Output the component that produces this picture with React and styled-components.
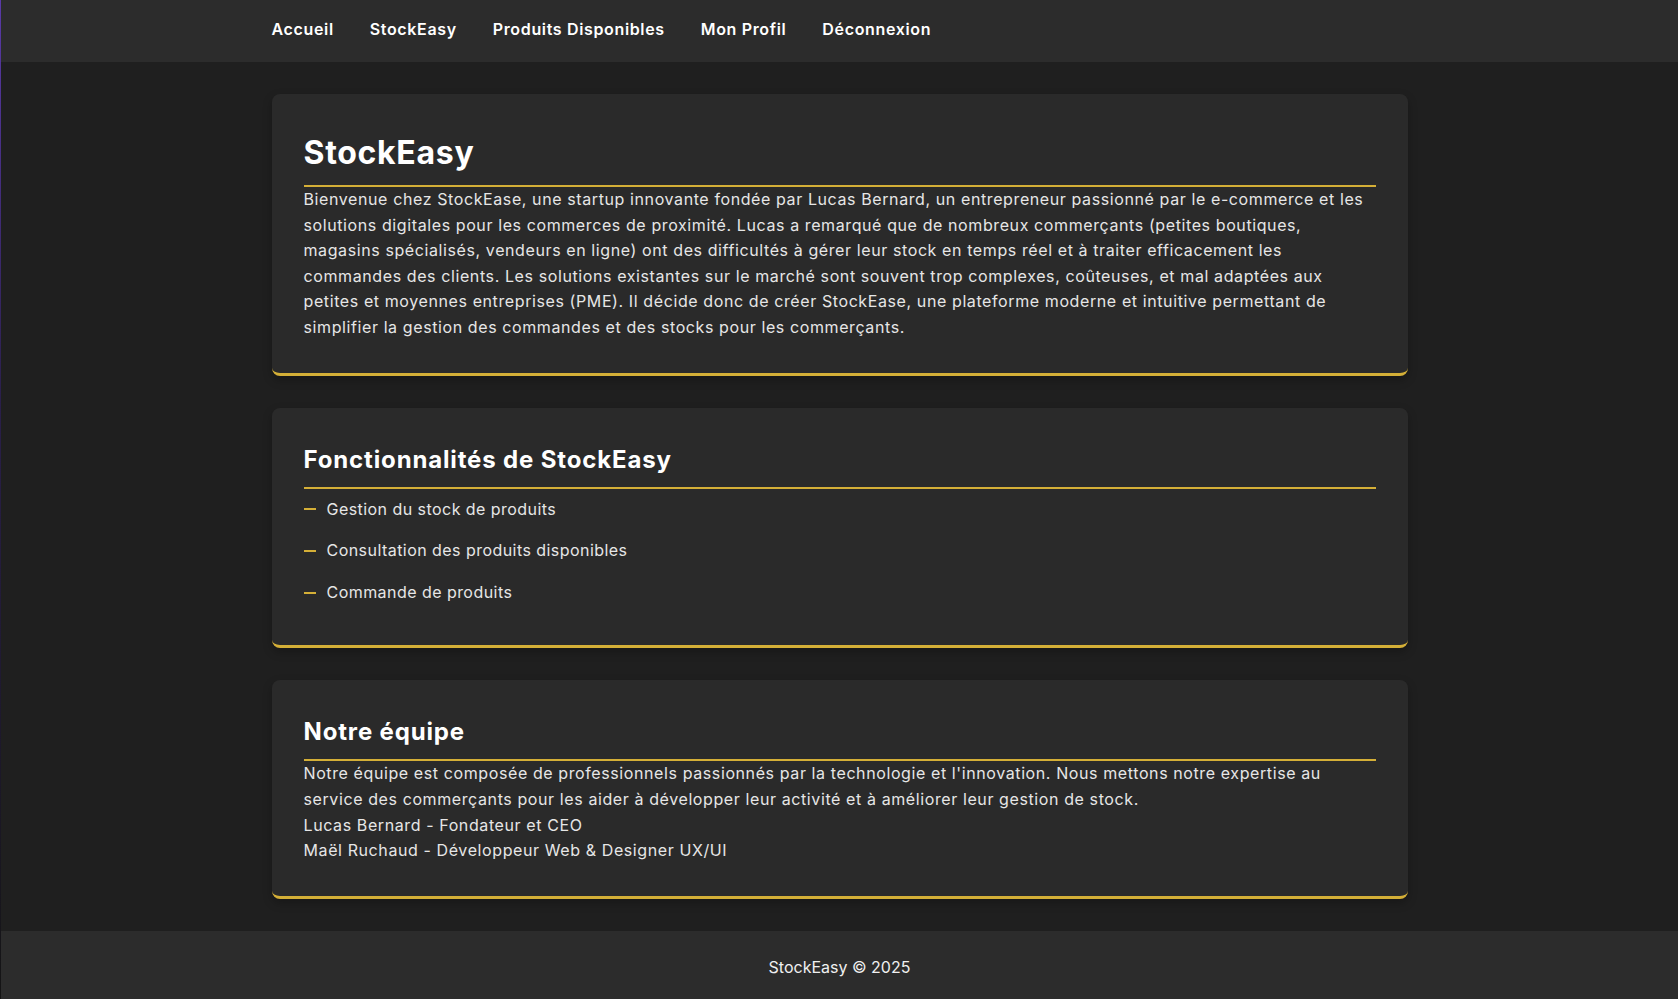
import styled, { createGlobalStyle } from "styled-components";

const GlobalStyle = createGlobalStyle`
  * {
    box-sizing: border-box;
  }

  body {
    margin: 0;
    background: #1f1f1f;
    color: #e6e6e6;
    font-family: "Inter", "Open Sans", sans-serif;
  }
`;

const navLinks = [
  "Accueil",
  "StockEasy",
  "Produits Disponibles",
  "Mon Profil",
  "Déconnexion",
];

const features = [
  "Gestion du stock de produits",
  "Consultation des produits disponibles",
  "Commande de produits",
];

const App = () => {
  return (
    <>
      <GlobalStyle />
      <Page>
        <Header>
          <Container>
            <Nav>
              {navLinks.map((link) => (
                <NavLink key={link} href="#">
                  {link}
                </NavLink>
              ))}
            </Nav>
          </Container>
        </Header>

        <Main>
          <Container>
            <Card>
              <Title>StockEasy</Title>
              <Text>
                Bienvenue chez StockEase, une startup innovante fondée par
                Lucas Bernard, un entrepreneur passionné par le e-commerce et
                les solutions digitales pour les commerces de proximité. Lucas
                a remarqué que de nombreux commerçants (petites boutiques,
                magasins spécialisés, vendeurs en ligne) ont des difficultés à
                gérer leur stock en temps réel et à traiter efficacement les
                commandes des clients. Les solutions existantes sur le marché
                sont souvent trop complexes, coûteuses, et mal adaptées aux
                petites et moyennes entreprises (PME). Il décide donc de créer
                StockEase, une plateforme moderne et intuitive permettant de
                simplifier la gestion des commandes et des stocks pour les
                commerçants.
              </Text>
            </Card>

            <Card>
              <Subtitle>Fonctionnalités de StockEasy</Subtitle>
              <FeatureList>
                {features.map((feature) => (
                  <FeatureItem key={feature}>{feature}</FeatureItem>
                ))}
              </FeatureList>
            </Card>

            <Card>
              <Subtitle>Notre équipe</Subtitle>
              <Text>
                Notre équipe est composée de professionnels passionnés par la
                technologie et l'innovation. Nous mettons notre expertise au
                service des commerçants pour les aider à développer leur
                activité et à améliorer leur gestion de stock.
              </Text>
              <Text>Lucas Bernard - Fondateur et CEO</Text>
              <Text>Maël Ruchaud - Développeur Web &amp; Designer UX/UI</Text>
            </Card>
          </Container>
        </Main>

        <Footer>StockEasy © 2025</Footer>
      </Page>
    </>
  );
};

export default App;

const Page = styled.div`
  min-height: 100vh;
  display: flex;
  flex-direction: column;
  border-left: 1px solid;
  border-image: linear-gradient(#5a3aa8, #2a1f4a 40%, #141414) 1;
`;

const Container = styled.div`
  max-width: 1200px;
  margin: 0 auto;
  padding: 0 32px;
`;

const Header = styled.header`
  background: #2c2c2c;
  padding: 17px 0 21px;
`;

const Nav = styled.nav`
  display: flex;
  gap: 36px;
`;

const NavLink = styled.a`
  color: #ffffff;
  text-decoration: none;
  font-size: 16px;
  font-weight: 600;
  line-height: 24px;
  letter-spacing: 0.65px;
`;

const Main = styled.main`
  flex: 1;
  padding: 32px 0;
`;

const Card = styled.section`
  background: #2a2a2a;
  border-radius: 8px;
  border-bottom: 3px solid #d4af37;
  padding: 32px;
  box-shadow: 0 4px 10px rgba(0, 0, 0, 0.25);

  & + & {
    margin-top: 32px;
  }
`;

const Title = styled.h1`
  margin: 0;
  font-size: 32px;
  font-weight: 700;
  line-height: 1.5;
  letter-spacing: 0.7px;
  color: #ffffff;
  padding: 3px 0 8px;
  border-bottom: 2px solid #d4af37;
`;

const Subtitle = styled.h2`
  margin: 0;
  font-size: 24px;
  font-weight: 700;
  line-height: 1.5;
  letter-spacing: 0.85px;
  color: #ffffff;
  padding: 2px 0 9px;
  border-bottom: 2px solid #d4af37;
`;

const Text = styled.p`
  margin: 0;
  font-size: 16px;
  line-height: 1.6;
  letter-spacing: 0.6px;
  color: #e6e6e6;
`;

const FeatureList = styled.ul`
  list-style: none;
  margin: 0;
  padding: 0;
`;

const FeatureItem = styled.li`
  display: flex;
  align-items: center;
  padding: 8px 0;
  font-size: 16px;
  line-height: 1.6;
  letter-spacing: 0.45px;
  color: #e6e6e6;

  &::before {
    content: "";
    width: 12px;
    height: 2px;
    background: #d4af37;
    margin-right: 11px;
  }
`;

const Footer = styled.footer`
  background: #2c2c2c;
  padding: 24px 0 20px;
  text-align: center;
  font-size: 16px;
  line-height: 1.6;
  color: #f0f0f0;
`;
